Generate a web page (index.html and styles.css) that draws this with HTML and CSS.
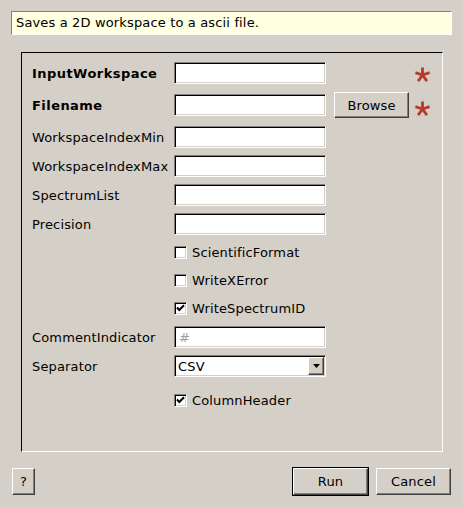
FILE: index.html
```html
<!DOCTYPE html>
<html>
<head>
<meta charset="utf-8">
<title>SaveAscii</title>
<link rel="stylesheet" href="styles.css">
</head>
<body>
<div class="dialog">
  <div class="tip">Saves a 2D workspace to a ascii file.</div>
  <div class="frame">
    <div class="form">
      <div class="lbl bold c1">InputWorkspace</div>
      <input class="field c2 top" type="text">
      <svg class="star c4 star1" width="15" height="15" viewBox="0 0 15 15"><path d="M7.5 8V0.5M7.5 8L14.6 5.7M7.5 8L0.4 5.7M7.5 8L11.9 14.1M7.5 8L3.1 14.1"/></svg>

      <div class="lbl bold c1">Filename</div>
      <input class="field c2 mid" type="text">
      <button class="btn c3 browse">Browse</button>
      <svg class="star c4 star2" width="15" height="15" viewBox="0 0 15 15"><path d="M7.5 8V0.5M7.5 8L14.6 5.7M7.5 8L0.4 5.7M7.5 8L11.9 14.1M7.5 8L3.1 14.1"/></svg>

      <div class="lbl c1">WorkspaceIndexMin</div>
      <input class="field c2" type="text">

      <div class="lbl c1">WorkspaceIndexMax</div>
      <input class="field c2" type="text">

      <div class="lbl c1">SpectrumList</div>
      <input class="field c2" type="text">

      <div class="lbl c1">Precision</div>
      <input class="field c2" type="text">

      <label class="cb"><span class="box"></span>ScientificFormat</label>
      <label class="cb"><span class="box"></span>WriteXError</label>
      <label class="cb"><span class="box"><svg width="11" height="11" viewBox="0 0 11 11"><path d="M2 4.5L4.3 7L9 2.2"/></svg></span>WriteSpectrumID</label>

      <div class="lbl c1">CommentIndicator</div>
      <input class="field c2 comment" type="text" placeholder="#">

      <div class="lbl c1">Separator</div>
      <div class="combo c2"><span class="val">CSV</span><span class="arrow"><svg width="7" height="4" viewBox="0 0 7 4"><polygon points="0,0 7,0 3.5,4"/></svg></span></div>

      <label class="cb last"><span class="box"><svg width="11" height="11" viewBox="0 0 11 11"><path d="M2 4.5L4.3 7L9 2.2"/></svg></span>ColumnHeader</label>
    </div>
  </div>
  <div class="actions">
    <button class="btn help">?</button>
    <div class="spacer"></div>
    <button class="btn default">Run</button>
    <button class="btn">Cancel</button>
  </div>
</div>
</body>
</html>
```
FILE: styles.css
```css
html, body {
  margin: 0;
  background: #d4d0c8;
}
body {
  font: 13px "DejaVu Sans", "Liberation Sans", sans-serif;
  color: #000;
  letter-spacing: 0.15px;
}
.dialog {
  width: 463px;
  height: 507px;
  box-sizing: border-box;
  padding: 11px 11px 0;
  display: flex;
  flex-direction: column;
}
.tip {
  height: 24px;
  box-sizing: border-box;
  background: #ffffe1;
  border: 1px solid;
  border-color: #808080 #ffffff #ffffff #808080;
  padding-left: 4px;
  line-height: 22px;
  white-space: nowrap;
}
.frame {
  margin: 17px 9px 0 10px;
  height: 400px;
  box-sizing: border-box;
  border: 1px solid;
  border-color: #000 #fff #fff #000;
  padding: 9px 0 0 10px;
}
.form {
  display: grid;
  grid-template-columns: 134px 152px 75px 15px;
  grid-template-rows: 23px 27px 22px 22px 22px 22px 21px 21px 21px 22px 22px 27px;
  column-gap: 8px;
  row-gap: 7px;
  align-items: center;
}
.c1 { grid-column: 1; }
.c2 { grid-column: 2; }
.c3 { grid-column: 3; }
.c4 { grid-column: 4; }
.lbl {
  white-space: nowrap;
  align-self: center;
}
.bold {
  font-weight: bold;
  letter-spacing: 0.45px;
}
.field {
  width: 152px;
  height: 22px;
  box-sizing: border-box;
  margin: 0;
  padding: 0 4px;
  font: inherit;
  background: #fff;
  border: 1px solid;
  border-color: #808080 #ffffff #ffffff #808080;
  box-shadow: inset 1px 1px 0 #000, inset -1px -1px 0 #d4d0c8;
  outline: none;
}
.field::placeholder { color: #a0a0a0; }
.top { align-self: start; }
.mid { align-self: start; margin-top: 2px; }
.star {
  align-self: start;
  margin-left: -2px;
  fill: none;
  stroke: #b8382b;
  stroke-width: 2.8;
}
.star1 { margin-top: 5px; }
.star2 { margin-top: 9px; }
.btn {
  margin: 0;
  padding: 0;
  width: 75px;
  height: 27px;
  box-sizing: border-box;
  font: inherit;
  letter-spacing: 0.15px;
  color: #000;
  background: #d4d0c8;
  border: 1px solid;
  border-color: #ffffff #404040 #404040 #ffffff;
  box-shadow: inset -1px -1px 0 #808080;
}
.browse {
  height: 26px;
  align-self: start;
}
.cb {
  grid-column: 2 / 5;
  display: flex;
  align-items: center;
  gap: 5px;
  white-space: nowrap;
}
.cb.last { align-self: end; height: 21px; }
.box {
  width: 13px;
  height: 13px;
  box-sizing: border-box;
  background: #fff;
  border: 1px solid;
  border-color: #808080 #ffffff #ffffff #808080;
  box-shadow: inset 1px 1px 0 #000, inset -1px -1px 0 #d4d0c8;
  display: flex;
}
.box svg {
  fill: none;
  stroke: #000;
  stroke-width: 2;
}
.combo {
  width: 152px;
  height: 22px;
  box-sizing: border-box;
  display: flex;
  align-items: center;
  background: #fff;
  border: 1px solid;
  border-color: #808080 #ffffff #ffffff #808080;
  box-shadow: inset 1px 1px 0 #000, inset -1px -1px 0 #d4d0c8;
  padding: 1px 1px 1px 3px;
}
.val { flex: 1; }
.arrow {
  width: 16px;
  height: 18px;
  box-sizing: border-box;
  background: #d4d0c8;
  border: 1px solid;
  border-color: #ffffff #404040 #404040 #ffffff;
  box-shadow: inset -1px -1px 0 #808080;
  display: flex;
  align-items: center;
  justify-content: center;
}
.arrow svg { fill: #000; }
.actions {
  display: flex;
  align-items: flex-start;
  gap: 8px;
  margin: 16px 1px 0 1px;
}
.spacer { flex: 1; }
.help { width: 23px; }
.default {
  box-shadow: 0 0 0 1px #000, inset -1px -1px 0 #808080;
}
```
